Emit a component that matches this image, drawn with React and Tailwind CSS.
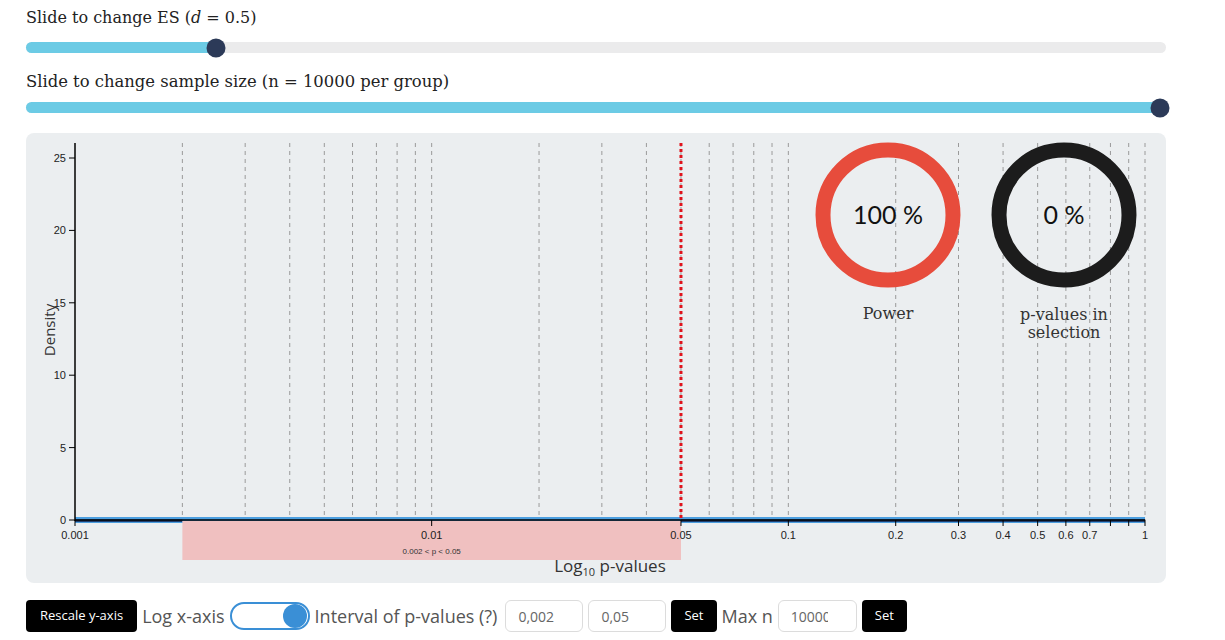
import {useState} from "react";

const slab = {fontFamily: '"DejaVu Serif", serif'};

const xScale = (p) => 49 + 356.67 * (Math.log10(p) + 3);
const yScale = (v) => 387 - v * 14.48;

const gridValues = [];
[-3, -2, -1].forEach((k) => {
    for (let m = 1; m <= 9; m++) {
        if (k === -3 && m === 1) continue;
        gridValues.push(m * Math.pow(10, k));
    }
});
gridValues.push(1);

const xTicks = [
    [0.001, "0.001"], [0.01, "0.01"], [0.05, "0.05"], [0.1, "0.1"], [0.2, "0.2"], [0.3, "0.3"],
    [0.4, "0.4"], [0.5, "0.5"], [0.6, "0.6"], [0.7, "0.7"], [0.8, ""], [0.9, ""], [1, "1"],
];

function Slider({fill, thumbAt}) {
    return (
        <div className="relative h-[11px] w-full rounded-full bg-[#ebebec]">
            <div className="h-full rounded-full bg-[#6ccbe5]" style={{width: fill}}/>
            <div className="absolute top-1/2 h-[19px] w-[19px] -translate-x-1/2 -translate-y-1/2 rounded-full bg-[#2c3a58]"
                 style={{left: thumbAt}}/>
        </div>
    );
}

function Chart() {
    return (
        <svg width="1140" height="450" className="block">
            {gridValues.map((p) => (
                <line key={p} x1={xScale(p)} x2={xScale(p)} y1="10" y2="387" stroke="#9a9a9a"
                      strokeWidth="1" strokeDasharray="4 4"/>
            ))}

            {/* density line */}
            <rect x="49" y="384" width="1070" height="6" fill="#4c9fe0"/>
            <rect x="49" y="386.5" width={xScale(0.002) - 49} height="2.5" fill="#1f3f70"/>
            <rect x={xScale(0.05)} y="386.5" width={1119 - xScale(0.05)} height="2.5" fill="#1f3f70"/>

            {/* selection */}
            <rect x={xScale(0.002)} y="388" width={xScale(0.05) - xScale(0.002)} height="39" fill="#f0c0c0"/>
            <text x={xScale(0.01)} y="421" fontSize="8" textAnchor="middle" fill="#333"
                  fontFamily='"Liberation Sans", sans-serif'>0.002 &lt; p &lt; 0.05</text>

            {/* critical p */}
            <line x1={xScale(0.05)} x2={xScale(0.05)} y1="10" y2="387" stroke="#e0131c" strokeWidth="3"
                  strokeDasharray="3 3"/>

            {/* axes */}
            <line x1="49" x2="1119" y1="387" y2="387" stroke="#000" strokeWidth="1.5"/>
            <line x1="49" x2="49" y1="10" y2="388" stroke="#000" strokeWidth="1.5"/>

            {[0, 5, 10, 15, 20, 25].map((v) => (
                <g key={v}>
                    <line x1="43" x2="49" y1={yScale(v)} y2={yScale(v)} stroke="#000"/>
                    <text x="40" y={yScale(v) + 4} fontSize="11" textAnchor="end" fill="#222"
                          fontFamily='"Liberation Sans", sans-serif'>{v}</text>
                </g>
            ))}

            {xTicks.map(([p, label]) => (
                <g key={p}>
                    <line x1={xScale(p)} x2={xScale(p)} y1="387" y2="393" stroke="#000"/>
                    {label && (
                        <text x={xScale(p)} y="406" fontSize="11" textAnchor="middle" fill="#222"
                              fontFamily='"Liberation Sans", sans-serif'>{label}</text>
                    )}
                </g>
            ))}

            <text transform="translate(29 197) rotate(-90)" fontSize="15" textAnchor="middle" fill="#333"
                  fontFamily='"Open Sans", sans-serif'>Density</text>

            <text x="584" y="439" fontSize="17" textAnchor="middle" fill="#333"
                  fontFamily='"Open Sans", sans-serif'>
                Log<tspan fontSize="11" dy="4">10</tspan><tspan dy="-4"> p-values</tspan>
            </text>

            {/* gauges */}
            <circle cx="862" cy="82" r="65" fill="none" stroke="#e74c3c" strokeWidth="15"/>
            <text x="862" y="91" fontSize="25" textAnchor="middle" fill="#111"
                  fontFamily='Lato, sans-serif'>100 %</text>
            <text x="862" y="186" fontSize="16" textAnchor="middle" fill="#333"
                  fontFamily='"DejaVu Serif", serif'>Power</text>

            <circle cx="1038" cy="82" r="65" fill="none" stroke="#1c1c1c" strokeWidth="15"/>
            <text x="1038" y="91" fontSize="25" textAnchor="middle" fill="#111"
                  fontFamily='Lato, sans-serif'>0 %</text>
            <text x="1038" y="187" fontSize="16" textAnchor="middle" fill="#333"
                  fontFamily='"DejaVu Serif", serif'>p-values in</text>
            <text x="1038" y="205" fontSize="16" textAnchor="middle" fill="#333"
                  fontFamily='"DejaVu Serif", serif'>selection</text>
        </svg>
    );
}

export default function App() {
    const [logX] = useState(true);

    return (
        <div className="min-h-[640px] bg-white">
            <div className="ml-[26px] w-[1140px] pt-[6px]">
                <p className="h-[24px] text-[16px] leading-[24px] text-[#222]" style={slab}>
                    Slide to change ES (<i>d</i> = 0.5)
                </p>
                <div className="mt-[8px] flex h-[19px] items-center">
                    <Slider fill="190px" thumbAt="190px"/>
                </div>
                <p className="mt-[13px] h-[24px] text-[16.4px] leading-[24px] text-[#222]" style={slab}>
                    Slide to change sample size (n = 10000 per group)
                </p>
                <div className="mt-[4px] flex h-[19px] items-center">
                    <Slider fill="100%" thumbAt="1134px"/>
                </div>

                <div className="mt-[16px] h-[450px] overflow-hidden rounded-lg bg-[#ebeef0]">
                    <Chart/>
                </div>

                <div className="mt-[17px] flex items-center gap-[5px] text-[18px] text-[#555]"
                     style={{fontFamily: '"Open Sans", sans-serif'}}>
                    <button className="h-[32px] rounded bg-black px-[14px] text-[13px] text-white">
                        Rescale y-axis
                    </button>
                    <span>Log x-axis</span>
                    <div className="flex h-[28px] w-[80px] items-center justify-end rounded-full border-2 border-[#3a8fd6] bg-white px-[1px]">
                        {logX && <div className="h-[24px] w-[24px] rounded-full bg-[#3a8fd6]"/>}
                    </div>
                    <span>Interval of p-values (?)</span>
                    <input readOnly defaultValue="0,002"
                           className="ml-[3px] h-[32px] w-[78px] rounded-md border border-[#dcdcdc] px-[12px] text-[14px] text-[#666]"/>
                    <input readOnly defaultValue="0,05"
                           className="h-[32px] w-[78px] rounded-md border border-[#dcdcdc] px-[12px] text-[14px] text-[#666]"/>
                    <button className="h-[32px] rounded bg-black px-[13px] text-[13px] text-white">Set</button>
                    <span>Max n</span>
                    <input readOnly defaultValue="10000"
                           className="h-[32px] w-[79px] rounded-md border border-[#dcdcdc] pl-[12px] pr-[28px] text-[14px] text-[#666]"/>
                    <button className="h-[32px] rounded bg-black px-[13px] text-[13px] text-white">Set</button>
                </div>
            </div>
        </div>
    );
}
